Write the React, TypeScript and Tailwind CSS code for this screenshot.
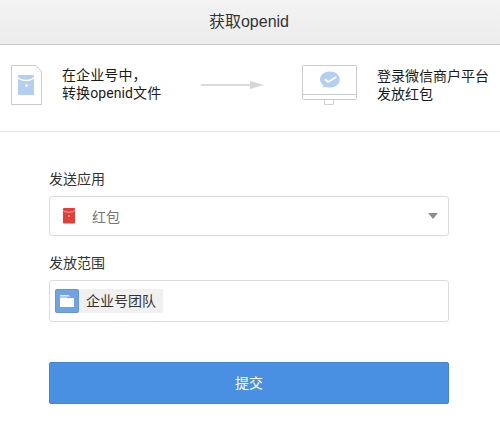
import React from 'react';

type StepProps = {
  lines: string[];
  className?: string;
};

const DocumentIcon = () => (
  <svg width="31" height="40" viewBox="0 0 31 40" fill="none" className="shrink-0">
    <path d="M0.5 0.5H25L30.5 6.5V39.5H0.5Z" fill="#fff" stroke="#c9cacb" />
    <path d="M25 1V6.5H30" stroke="#efefef" />
    <rect x="7" y="10" width="16" height="20" rx="0.5" fill="#b5cff0" />
    <path d="M7 12.5C10 16.3 20 16.3 23 12.5" stroke="#fff" strokeWidth="1.3" />
    <circle cx="15.5" cy="20.5" r="1.3" fill="#fff" />
  </svg>
);

const MonitorIcon = () => (
  <svg width="55" height="40" viewBox="0 0 55 40" fill="none" className="shrink-0">
    <rect x="0.5" y="0.5" width="54" height="34" rx="1" fill="#fff" stroke="#c9cacb" />
    <path d="M1 29.5H54" stroke="#c9cacb" />
    <path d="M22.5 35V39.5H31.5V35" stroke="#cfd0d1" />
    <path
      d="M28 6.5C33.5 6.5 37.7 10 37.7 14.5S33.5 22.6 28 22.6C26.6 22.6 25.3 22.4 24.1 22L20.8 22.6L21.3 20C19.3 18.6 18 16.7 18 14.5C18 10 22.5 6.5 28 6.5Z"
      fill="#b5cff0"
    />
    <path d="M22.8 14.2L26.2 17L34.2 12" stroke="#fff" strokeWidth="1.8" />
  </svg>
);

const ArrowIcon = () => (
  <svg width="64" height="10" viewBox="0 0 64 10" className="shrink-0">
    <path d="M0 4H50V6H0Z" fill="#dadada" />
    <path d="M49 1L63 5L49 9Z" fill="#d6d6d6" />
  </svg>
);

const RedPacketIcon = () => (
  <svg width="12" height="16" viewBox="0 0 12 16" fill="none" className="shrink-0">
    <rect width="12" height="15.5" rx="0.7" fill="#e63c3a" />
    <path d="M0 2.3C3 4.8 9 4.8 12 2.3" stroke="#f8b9b3" strokeWidth="0.9" />
    <circle cx="6" cy="8" r="0.9" fill="#f9c5bd" />
  </svg>
);

const FolderIcon = () => (
  <svg width="24" height="24" viewBox="0 0 24 24" className="shrink-0">
    <rect x="0.5" y="0.5" width="23" height="23" rx="1.5" fill="#6fa3e3" stroke="#6297d8" />
    <path d="M5 6H13.5L15.5 7.4H5Z" fill="#e6f0fc" />
    <path d="M5 8.4H11.5L12.5 9H19V18H5Z" fill="#fff" />
  </svg>
);

const StepText = ({ lines, className = '' }: StepProps) => (
  <p className={`whitespace-nowrap font-['Roboto','Noto_Sans_CJK_SC',sans-serif] text-sm leading-[18px] text-[#1a1a1a] ${className}`}>
    {lines.map((line) => (
      <span key={line} className="block">{line}</span>
    ))}
  </p>
);

export default function App() {
  return (
    <div className="h-[436px] w-[500px] overflow-hidden bg-white font-['Liberation_Sans','Noto_Sans_CJK_SC',sans-serif] text-[#333]">
      {/* Header */}
      <header className="flex h-[45px] items-center justify-center border-b border-[#c8c9ca] bg-linear-to-b from-[#f3f3f3] to-[#ececed] pr-0.5">
        <h1 className="text-base leading-6">获取openid</h1>
      </header>

      {/* Steps */}
      <section className="flex h-[87px] items-start border-b border-[#e3e4e5] pl-[11px] pt-5">
        <DocumentIcon />
        <div className="ml-5 w-[139px]">
          <StepText lines={['在企业号中，', '转换openid文件']} className="pt-px tracking-[0.1px]" />
        </div>
        <div className="pt-[15px]">
          <ArrowIcon />
        </div>
        <div className="ml-[37px]">
          <MonitorIcon />
        </div>
        <StepText lines={['登录微信商户平台', '发放红包']} className="ml-5 pt-0.5" />
      </section>

      {/* Form */}
      <form className="w-[449px] pl-[49px] pt-[37px] text-sm">
        <label className="block leading-5">发送应用</label>
        <div className="mt-[7px] flex h-10 items-center rounded-[3px] border border-[#dadbdc] pl-[13px] pr-2.5 text-[#777]">
          <RedPacketIcon />
          <span className="ml-[17px] flex-1 pt-0.5">红包</span>
          <svg width="10" height="6" viewBox="0 0 10 6">
            <path d="M0 0H10L5 6Z" fill="#8c8c8c" />
          </svg>
        </div>

        <label className="mt-[17px] block leading-5">发放范围</label>
        <div className="mt-[7px] flex h-[42px] items-center rounded-[3px] border border-[#dadbdc] pl-[5px]">
          <div className="flex h-6 items-center bg-[#f0f0f1] pr-[7px]">
            <FolderIcon />
            <span className="ml-[7px]">企业号团队</span>
          </div>
        </div>

        <button
          type="button"
          className="mt-10 block h-[42px] w-full rounded-[2px] border border-[#4384d3] bg-[#4990e3] text-sm text-white"
        >
          提交
        </button>
      </form>
    </div>
  );
}
